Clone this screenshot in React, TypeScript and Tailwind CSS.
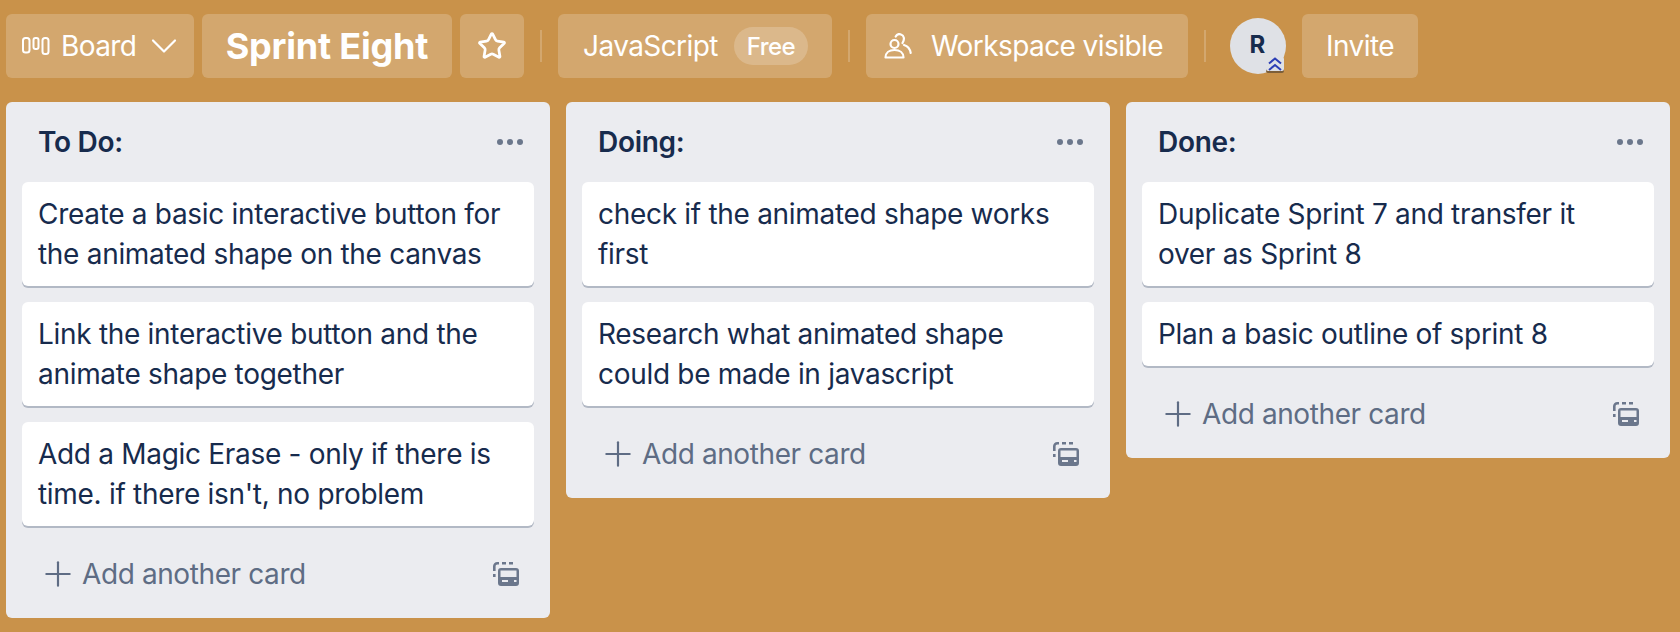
import { Plus, Star, ChevronDown } from "lucide-react";

const lists = [
  {
    title: "To Do:",
    cards: [
      "Create a basic interactive button for the animated shape on the canvas",
      "Link the interactive button and the animate shape together",
      "Add a Magic Erase - only if there is time. if there isn't, no problem",
    ],
  },
  {
    title: "Doing:",
    cards: [
      "check if the animated shape works first",
      "Research what animated shape could be made in javascript",
    ],
  },
  {
    title: "Done:",
    cards: [
      "Duplicate Sprint 7 and transfer it over as Sprint 8",
      "Plan a basic outline of sprint 8",
    ],
  },
];

function BoardIcon() {
  return (
    <svg width="28" height="18" viewBox="0 0 28 18" fill="none" stroke="white" strokeWidth="2">
      <rect x="1" y="1" width="6.500" height="14.500" rx="2.500" />
      <rect x="11.500" y="1" width="5" height="11" rx="2" />
      <rect x="20.500" y="1" width="6" height="16" rx="2.500" />
    </svg>
  );
}

function PeopleIcon() {
  return (
    <svg width="28" height="26" viewBox="0 0 28 26" fill="none" stroke="white" strokeWidth="2.200" strokeLinecap="round" strokeLinejoin="round">
      <circle cx="10.500" cy="11" r="4" />
      <path d="M1.500 24.500c0-4.500 3.500-7.500 9-7.500s9 3 9 7.500z" />
      <path d="M11.700 3.500c1-2 3.300-2.800 5.300-2 3 1 4 4.500 1.500 8.500" />
      <path d="M20 12c3.500 1 6 4 6.700 8" />
    </svg>
  );
}

function TemplateIcon() {
  return (
    <svg width="26" height="24" viewBox="0 0 26 24" fill="none" className="text-[#6b778c]">
      <path d="M1.300 15v-3M1.300 9V4.300a3 3 0 0 1 3-3h1.700M9 1.300h4M16 1.300h4" stroke="currentColor" strokeWidth="2.600" />
      <path
        fillRule="evenodd"
        clipRule="evenodd"
        fill="currentColor"
        d="M8 6h15a3 3 0 0 1 3 3v12a3 3 0 0 1-3 3H8a3 3 0 0 1-3-3V9a3 3 0 0 1 3-3zm-.500 2.500V15h16V8.500h-16zM9 18v2h6v-2H9zm12 0v2h2.500v-2H21z"
      />
    </svg>
  );
}

function Divider() {
  return <div className="mx-4 h-8 w-0.5 bg-white/20" />;
}

function List({ title, cards }: { title: string; cards: string[] }) {
  return (
    <section className="w-[544px] shrink-0 rounded-md bg-[#ebecf0]">
      <header className="flex h-20 items-center justify-between pl-8 pr-[27px]">
        <h2 className="text-[28px] font-semibold tracking-[-0.3px] text-[#172b4d]">{title}</h2>
        <div className="flex gap-[4px]">
          <span className="size-[6px] rounded-full bg-[#6b778c]" />
          <span className="size-[6px] rounded-full bg-[#6b778c]" />
          <span className="size-[6px] rounded-full bg-[#6b778c]" />
        </div>
      </header>
      <div className="flex flex-col gap-4 px-4">
        {cards.map((card) => (
          <div
            key={card}
            className="rounded-md bg-white px-4 pb-3 pt-3 text-[28px] leading-10 tracking-[-0.3px] text-[#172b4d] shadow-[0_2px_0_#091e4240]"
          >
            {card}
          </div>
        ))}
      </div>
      <footer className="flex h-[92px] items-center justify-between pl-[32px] pr-[31px] pt-1 text-[#5e6c84]">
        <div className="flex items-center gap-[4px]">
          <Plus size={40} strokeWidth={1.3} />
          <span className="text-[28px] tracking-[-0.4px]">Add another card</span>
        </div>
        <TemplateIcon />
      </footer>
    </section>
  );
}

export default function App() {
  return (
    <main className="min-h-screen bg-[#c9924a] pl-[6px] pt-[14px] font-['Inter',sans-serif]">
      {/* Top bar */}
      <nav className="flex h-16 items-center text-[28px] tracking-[-0.58px] text-white">
        <button className="flex h-16 w-[188px] items-center rounded-md bg-white/20 pl-4">
          <BoardIcon />
          <span className="ml-[11px]">Board</span>
          <ChevronDown size={44} strokeWidth={1.2} className="ml-[6px]" />
        </button>
        <div className="ml-2 flex h-16 w-[250px] items-center justify-center rounded-md bg-white/20 text-4xl font-bold tracking-[-0.2px]">
          Sprint Eight
        </div>
        <button className="ml-2 flex h-16 w-16 items-center justify-center rounded-md bg-white/20">
          <Star size={30} strokeWidth={2.2} />
        </button>
        <Divider />
        <div className="flex h-16 w-[274px] items-center rounded-md bg-white/20 pl-[25px]">
          <span>JavaScript</span>
          <span className="ml-4 flex h-[38px] w-[74px] items-center justify-center rounded-full bg-white/20 pt-[2px] text-2xl font-medium">
            Free
          </span>
        </div>
        <Divider />
        <div className="flex h-16 w-[322px] items-center rounded-md bg-white/20 pl-[18px]">
          <PeopleIcon />
          <span className="ml-[19px]">Workspace visible</span>
        </div>
        <Divider />
        <div className="relative ml-2 flex size-14 items-center justify-center rounded-full bg-[#dfe1e6] pb-[2px] pr-[1px] text-[24px] font-bold tracking-normal text-[#172b4d]">
          R
          <span className="absolute bottom-[3px] right-[2px] flex h-[14px] w-[18px] items-center justify-center rounded-[2px] bg-[#dfe1e6] shadow-[0_2px_0_#7d5f38]">
            <svg width="16" height="14" viewBox="0 0 16 14" fill="none" stroke="#2c3eb5" strokeWidth="2">
              <path d="M2 6.500l6-5 6 5M2 13l6-5 6 5" />
            </svg>
          </span>
        </div>
        <button className="ml-4 flex h-16 w-[116px] items-center justify-center rounded-md bg-white/20">Invite</button>
      </nav>

      {/* Lists */}
      <div className="mt-6 flex items-start gap-4">
        {lists.map((list) => (
          <List key={list.title} title={list.title} cards={list.cards} />
        ))}
      </div>
    </main>
  );
}
